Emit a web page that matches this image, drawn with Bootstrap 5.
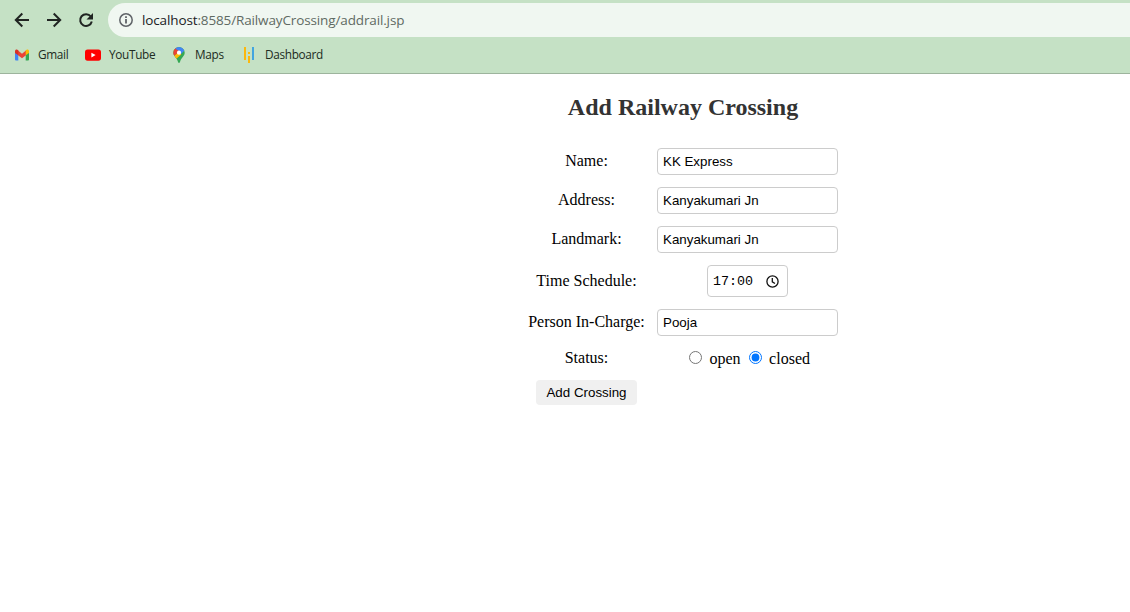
<!DOCTYPE html>
<html lang="en">
<head>
<meta charset="utf-8">
<title>Add Railway Crossing</title>
<link href="https://cdn.jsdelivr.net/npm/bootstrap@5.3.0/dist/css/bootstrap.min.css" rel="stylesheet">
<style>
body{background:#fff;color:#000;font-family:"Liberation Serif",serif;font-size:16px;line-height:18px;overflow:hidden}
.browser{height:74px;background:#c5e1c5;border-bottom:1px solid #9db49d;font-family:"Open Sans",sans-serif}
.toolbar{height:37px;padding:3px 0 0 14px}
.toolbar svg,.bookmarks svg{display:block;flex:none}
.address{height:34px;margin-left:14px;padding-left:11px;background:#f0f7f1;border-radius:17px 0 0 17px;color:#5f6a63;font-size:13.5px;letter-spacing:-.13px}
.address b{font-weight:400;color:#202124}
.url-text{margin-left:9px}
.bookmarks{height:36px;font-size:11.8px;letter-spacing:-.32px;color:#202b22}
.bookmarks a{color:inherit;text-decoration:none;white-space:nowrap}
.bookmarks span{padding-bottom:2px}
.mark-gmail{width:71px;margin-left:14px}
.mark-youtube{width:86px}
.mark-maps{width:70px}
.page-form{width:310px;margin-left:528px}
h1{font-size:24px;font-weight:700;line-height:28px;color:#333;margin:19px 0 27px}
.fields{display:grid;grid-template-columns:117px 181px;gap:12px;align-items:center;justify-items:center;grid-template-rows:27px 27px 27px 32px 27px 20px 25px}
.fields label{white-space:nowrap}
.field-box{width:181px;height:27px;padding:5px;border:1px solid #ccc;border-radius:4px;font:13.33px "Liberation Sans",sans-serif;color:#000;outline:0}
.field-label{padding-bottom:1px}
.time-box{width:81px;height:32px;padding:0 8px 0 5px;border:1px solid #ccc;border-radius:4px;font:13.33px "Liberation Mono",monospace}
.dot{width:13px;height:13px;margin:0 0 2px;accent-color:#0075ff}
.opt{margin:2px 8px 0 7.5px}
.opt:last-child{margin-right:0}
.status-set{padding-left:4px}
.add-btn{width:101px;height:25px;padding:0;border:0;border-radius:4px;background:#f0f0f0;color:#000;font:13.33px "Liberation Sans",sans-serif}
</style>
</head>
<body>
<header class="browser">
  <div class="toolbar d-flex align-items-center">
    <svg width="16" height="16" viewBox="0 0 16 16" fill="none" stroke="#202422" stroke-width="2"><path d="M15 8H2M8.3 1.5 1.8 8l6.5 6.5"/></svg>
    <svg class="ms-3" width="16" height="16" viewBox="0 0 16 16" fill="none" stroke="#202422" stroke-width="2"><path d="M1 8h13M7.7 1.5 14.2 8l-6.5 6.5"/></svg>
    <svg class="ms-3" width="16" height="16" viewBox="0 0 16 16"><path d="M12.8 4.5A5.9 5.9 0 1 0 13.8 9.5" fill="none" stroke="#202422" stroke-width="2"/><path d="M15 1v6.5H8.5z" fill="#202422"/></svg>
    <div class="address d-flex align-items-center flex-grow-1">
      <svg width="14" height="14" viewBox="0 0 14 14"><circle cx="7" cy="7" r="6.2" fill="none" stroke="#5f6368" stroke-width="1.5"/><path d="M6.1 6h1.8v4.6H6.1zM6.1 3.3h1.8V5H6.1z" fill="#5f6368"/></svg>
      <span class="url-text"><b>localhost</b>:8585/RailwayCrossing/addrail.jsp</span>
    </div>
  </div>
  <nav class="bookmarks d-flex align-items-center">
    <a href="#" class="mark-gmail d-flex align-items-center"><svg width="16" height="16" viewBox="0 0 16 16"><path d="M1 4.5h3.3V13.5H2a1 1 0 0 1-1-1z" fill="#4285f4"/><path d="M11.7 4.5H15v8a1 1 0 0 1-1 1h-2.3z" fill="#34a853"/><path d="M4 3.6 8 6.8l4-3.2v4.6L8 11.3 4 8.2z" fill="#ea4335"/><path d="M1 4.3C1 2.4 2.9 2 4.3 3.2v5.1L1 6z" fill="#d93025"/><path d="M15 4.3c0-1.9-1.9-2.3-3.3-1.1v5.1L15 6z" fill="#fbbc04"/></svg><span class="ms-2">Gmail</span></a>
    <a href="#" class="mark-youtube d-flex align-items-center"><svg width="16" height="16" viewBox="0 0 16 16"><rect y="2.5" width="16" height="11.2" rx="2.6" fill="#f00"/><path d="m6.4 5.7 4.2 2.4-4.2 2.4z" fill="#fff"/></svg><span class="ms-2">YouTube</span></a>
    <a href="#" class="mark-maps d-flex align-items-center"><svg width="16" height="16" viewBox="0 0 16 16"><defs><clipPath id="pin"><path d="M8 0a5.7 5.7 0 0 0-5.7 5.7c0 3.2 3.2 4.6 4.4 8.3.3.8.5 2 1.3 2s1-1.2 1.3-2c1.2-3.7 4.4-5.1 4.4-8.3A5.7 5.7 0 0 0 8 0z"/></clipPath></defs><g clip-path="url(#pin)"><path d="M0 0h16v16H0z" fill="#34a853"/><path d="M1 11 8 4l2.2 3.6L4 13z" fill="#fbbc04"/><path d="M0 0h5l3.5 4L2 10z" fill="#ea4335"/><path d="M4 1.5 6 0h8v3l-4 4-2-3z" fill="#4285f4"/></g><circle cx="8" cy="5.7" r="2.1" fill="#fff"/></svg><span class="ms-2">Maps</span></a>
    <a href="#" class="d-flex align-items-center"><svg width="16" height="16" viewBox="0 0 16 16"><path d="M3 0h2v13H3zM7 5h2v2H7zM7 9h2v7H7z" fill="#fbb80f"/><path d="M11 0h2v13h-2z" fill="#42a5df"/></svg><span class="ms-2">Dashboard</span></a>
  </nav>
</header>
<main class="page-form">
  <h1 class="text-center text-nowrap">Add Railway Crossing</h1>
  <form class="fields">
    <label class="field-label" for="name">Name:</label><input id="name" class="field-box" value="KK Express">
    <label class="field-label" for="address">Address:</label><input id="address" class="field-box" value="Kanyakumari Jn">
    <label class="field-label" for="landmark">Landmark:</label><input id="landmark" class="field-box" value="Kanyakumari Jn">
    <label>Time Schedule:</label>
    <div class="time-box d-flex align-items-center justify-content-between"><span>17:00</span><svg width="13" height="13" viewBox="0 0 13 13" fill="none" stroke="#111" stroke-width="1.3"><circle cx="6.5" cy="6.5" r="5.6"/><path d="M6.3 3v3.8l2.7 1.7"/></svg></div>
    <label class="field-label" for="person">Person In-Charge:</label><input id="person" class="field-box" value="Pooja">
    <label>Status:</label>
    <div class="d-flex align-items-center status-set"><input class="dot" type="radio" name="status" aria-label="open"><span class="opt">open</span><input class="dot" type="radio" name="status" aria-label="closed" checked><span class="opt">closed</span></div>
    <button type="button" class="add-btn">Add Crossing</button>
  </form>
</main>
<script src="https://cdn.jsdelivr.net/npm/bootstrap@5.3.0/dist/js/bootstrap.bundle.min.js"></script>
</body>
</html>
